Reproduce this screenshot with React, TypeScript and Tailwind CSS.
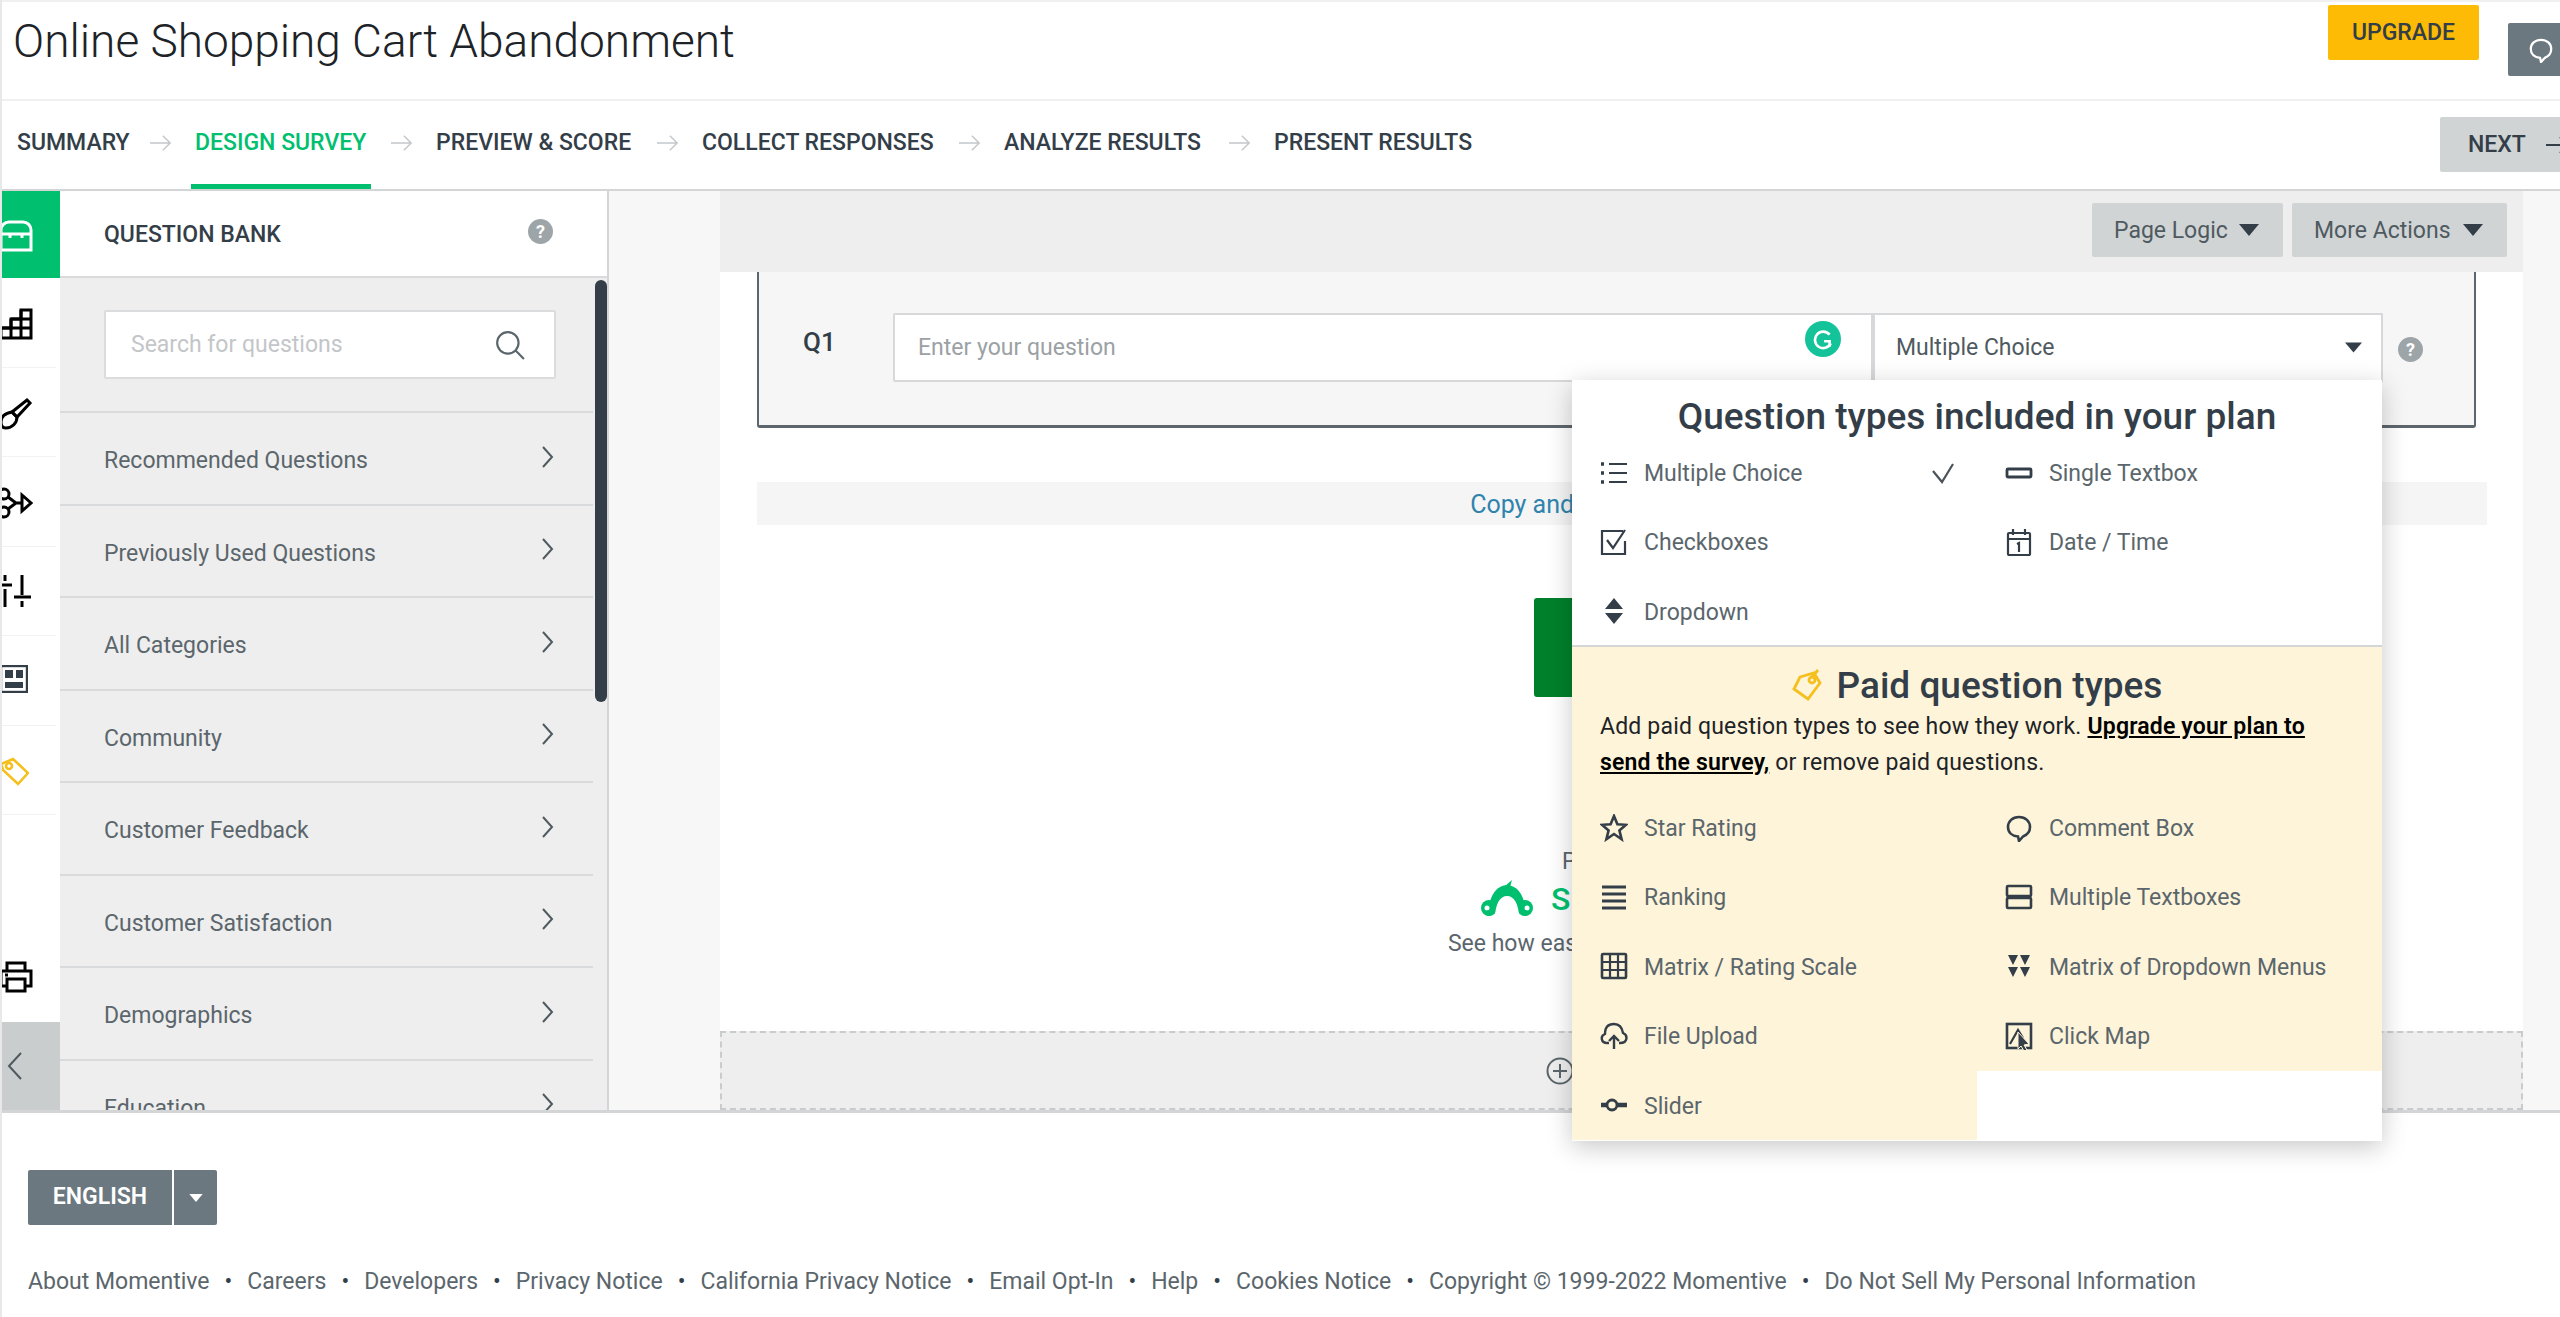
import type { ReactNode } from 'react';

const included = [
  { label: 'Multiple Choice', icon: 'list', check: true },
  { label: 'Single Textbox', icon: 'textbox' },
  { label: 'Checkboxes', icon: 'checkbox' },
  { label: 'Date / Time', icon: 'date' },
  { label: 'Dropdown', icon: 'dropdown' },
];

const paid = [
  { label: 'Star Rating', icon: 'star' },
  { label: 'Comment Box', icon: 'comment' },
  { label: 'Ranking', icon: 'ranking' },
  { label: 'Multiple Textboxes', icon: 'multi' },
  { label: 'Matrix / Rating Scale', icon: 'matrix' },
  { label: 'Matrix of Dropdown Menus', icon: 'matrixDrop' },
  { label: 'File Upload', icon: 'upload' },
  { label: 'Click Map', icon: 'clickmap' },
  { label: 'Slider', icon: 'slider' },
];

const bank = [
  'Recommended Questions',
  'Previously Used Questions',
  'All Categories',
  'Community',
  'Customer Feedback',
  'Customer Satisfaction',
  'Demographics',
  'Education',
];

const tabs = [
  { label: 'SUMMARY', w: 'w-[110px]' },
  { label: 'DESIGN SURVEY', w: 'w-[173px]', active: true },
  { label: 'PREVIEW & SCORE', w: 'w-[198px]' },
  { label: 'COLLECT RESPONSES', w: 'w-[234px]' },
  { label: 'ANALYZE RESULTS', w: 'w-[202px]' },
  { label: 'PRESENT RESULTS', w: 'w-[200px]' },
];

const rail = [
  { name: 'stairs', pad: 'pt-[3px]' },
  { name: 'brush', pad: 'pt-[5px]' },
  { name: 'flow', pad: 'pt-[3px]' },
  { name: 'sliders', pad: 'pt-0' },
  { name: 'dash', pad: 'pb-[2px]' },
  { name: 'tag', pad: 'pt-[3px]' },
];

const footerLinks = [
  'About Momentive',
  'Careers',
  'Developers',
  'Privacy Notice',
  'California Privacy Notice',
  'Email Opt-In',
  'Help',
  'Cookies Notice',
  'Copyright © 1999-2022 Momentive',
  'Do Not Sell My Personal Information',
];

function TypeIcon({ name }: { name: string }) {
  const paths: Record<string, ReactNode> = {
    list: (
      <>
        <path d="M9 5h18M9 14h18M9 23h18" />
        <path d="M1 5h3M1 14h3M1 23h3" strokeWidth={3.4} />
      </>
    ),
    textbox: <rect x="2" y="10" width="24" height="8" rx="1" strokeWidth={2.8} />,
    checkbox: (
      <>
        <path d="M25 13v13H2V3h21" />
        <path d="M7 12l6 8 12-18" />
      </>
    ),
    date: (
      <>
        <rect x="3" y="5" width="22" height="22" rx="1" />
        <path d="M3 11h22M8 1v6M20 1v6M12 16l2-1v9" />
      </>
    ),
    dropdown: (
      <>
        <path d="M14 1l9 11H5z" fill="#333e48" stroke="none" />
        <path d="M14 27L5 16h18z" fill="#333e48" stroke="none" />
      </>
    ),
    star: <path d="M14 2l3.4 8.2 8.6.6-6.6 5.6 2.2 8.8L14 20l-7.600 5.200 2.200-8.800L2 10.800l8.600-.6z" strokeWidth={2.6} />,
    comment: <path d="M14 3c6.500 0 11 4.300 11 10 0 5-3.200 8-7 9.500L14 27l-1-4.500C7 22 3 18.500 3 13 3 7.300 7.500 3 14 3z" strokeWidth={2.6} />,
    ranking: <path d="M2 4h24M2 11h24M2 18h24M2 25h24" strokeWidth={2.8} />,
    multi: (
      <>
        <rect x="2" y="3" width="24" height="10" rx="1" strokeWidth={2.6} />
        <rect x="2" y="15" width="24" height="10" rx="1" strokeWidth={2.6} />
      </>
    ),
    matrix: (
      <>
        <rect x="2" y="2" width="24" height="24" rx="1" strokeWidth={2.6} />
        <path d="M10 2v24M18 2v24M2 10h24M2 18h24" />
      </>
    ),
    matrixDrop: (
      <>
        <path d="M3 3h10l-5 10zM15 3h10l-5 10zM3 15h10l-5 10zM15 15h10l-5 10z" fill="#333e48" stroke="none" />
      </>
    ),
    upload: (
      <>
        <path d="M9 21H7C1 21 0 14 5 12c0-8 4-10 9-10s8 3 9 9c5 2 5 10-3 10h-1" strokeWidth={2.4} />
        <path d="M14 27V14M9 19l5-5 5 5" strokeWidth={2.4} />
      </>
    ),
    clickmap: (
      <>
        <rect x="2" y="2" width="24" height="24" strokeWidth={2.6} />
        <path d="M5 22l8-14 5 8" />
        <path d="M13 10l11 12-5 1 3 5-3 1-3-5-3 3z" fill="#333e48" stroke="#fff4d9" strokeWidth={1} />
      </>
    ),
    slider: (
      <>
        <path d="M1 14h6M18 14h9" strokeWidth={4.4} />
        <circle cx="12" cy="14" r="5" strokeWidth={2.8} />
      </>
    ),
  };
  return (
    <svg viewBox="0 0 28 28" fill="none" stroke="#333e48" strokeWidth={2.2} className="w-[28px] h-[28px] shrink-0">
      {paths[name]}
    </svg>
  );
}

function TypeItem({ label, icon, check }: { label: string; icon: string; check?: boolean }) {
  return (
    <div className="flex items-center h-full pl-[28px] pr-[22px] gap-[16px] text-[23px] text-[#5b666c]">
      <TypeIcon name={icon} />
      <span className="flex-1 whitespace-nowrap pt-[3px]">{label}</span>
      {check && (
        <svg viewBox="0 0 24 24" fill="none" stroke="#4a545a" strokeWidth={2.2} className="w-[24px] h-[24px]">
          <path d="M2 10l9 11L22 3" />
        </svg>
      )}
    </div>
  );
}

function Caret({ className }: { className: string }) {
  return (
    <svg viewBox="0 0 20 12" className={className}>
      <path d="M0 0h20L10 12z" />
    </svg>
  );
}

function Help({ className }: { className: string }) {
  return (
    <div className={`rounded-full bg-[#9da5a9] text-white font-bold text-[18px] flex items-center justify-center w-[25px] h-[25px] ${className}`}>
      ?
    </div>
  );
}

function Chevron() {
  return (
    <svg viewBox="0 0 12 24" fill="none" stroke="#4f5a60" strokeWidth={2} className="w-[12px] h-[24px] -mt-[3px]">
      <path d="M1 2l9 10-9 10" />
    </svg>
  );
}

function RailIcon({ name }: { name: string }) {
  if (name === 'chest')
    return (
      <svg viewBox="0 0 34 32" fill="none" stroke="#fff" strokeWidth={3} className="w-[34px] h-[32px] -ml-[3px]">
        <path d="M2 30V10a8 8 0 0 1 8-8h14a8 8 0 0 1 8 8v20z" />
        <path d="M2 14h30M11 14v4M23 14v4" />
      </svg>
    );
  if (name === 'stairs')
    return (
      <svg viewBox="0 0 34 32" fill="none" stroke="#000" strokeWidth={3} className="w-[34px] h-[32px] -ml-[3px]">
        <path d="M22 2h10v28H2V20h10V11h10z" />
        <path d="M22 2v28M12 11v19M12 11h20M2 20h30" />
      </svg>
    );
  if (name === 'brush')
    return (
      <svg viewBox="0 0 34 32" fill="none" stroke="#000" strokeWidth={3} className="w-[34px] h-[32px] -ml-[3px]">
        <path d="M13 14L28 2l3 3-13 14z" />
        <path d="M13 14c-6 1-11 4-11 10 0 4 2 6 5 6 6 0 11-5 11-11z" />
      </svg>
    );
  if (name === 'flow')
    return (
      <svg viewBox="0 0 34 32" fill="none" stroke="#000" strokeWidth={3} className="w-[34px] h-[32px] -ml-[3px]">
        <circle cx="5" cy="7" r="5" />
        <circle cx="5" cy="25" r="5" />
        <path d="M9 10l8 6-8 6M17 16h6" />
        <path d="M23 8l9 8-9 8z" />
      </svg>
    );
  if (name === 'sliders')
    return (
      <svg viewBox="0 0 34 32" fill="none" stroke="#000" strokeWidth={3} className="w-[34px] h-[32px] -ml-[3px]">
        <path d="M6 0v6M6 14v18M23 0v20M23 26v6" />
        <path d="M-2 10h15M15 22h17" />
      </svg>
    );
  if (name === 'dash')
    return (
      <svg viewBox="0 0 28 28" fill="none" stroke="#333e48" strokeWidth={2.4} className="w-[28px] h-[28px] -ml-[2px]">
        <rect x="1" y="1" width="26" height="26" />
        <path d="M5 5h8v8H5zM16 5h7v8h-7zM5 17h18v6H5z" fill="#333e48" stroke="none" />
      </svg>
    );
  if (name === 'tag')
    return (
      <svg viewBox="0 0 30 30" fill="none" stroke="#f5bf1d" strokeWidth={2.6} className="w-[30px] h-[30px] -ml-[3px]">
        <path d="M2 8l12-5 15 14-10 11L4 14z" />
        <circle cx="10" cy="10" r="3" />
      </svg>
    );
  return (
    <svg viewBox="0 0 34 32" fill="none" stroke="#000" strokeWidth={3} className="w-[34px] h-[32px] -ml-[3px]">
      <path d="M8 10V2h18v8" />
      <path d="M8 25H2V10h30v15h-6" />
      <rect x="8" y="18" width="18" height="12" />
      <path d="M6 14h3" />
    </svg>
  );
}

function MonkeyLogo() {
  return (
    <svg viewBox="0 0 54 38" className="w-[54px] h-[38px] shrink-0">
      <path fill="#00bf6f" d="M9 28C10 14 18 5 27 5s17 9 18 23z" />
      <path fill="#00bf6f" d="M25 6l7-6-2 7z" />
      <circle cx="9" cy="28" r="8" fill="#00bf6f" />
      <circle cx="45" cy="28" r="8" fill="#00bf6f" />
      <circle cx="7" cy="28" r="2.500" fill="#fff" />
      <circle cx="47" cy="28" r="2.500" fill="#fff" />
      <path fill="#fff" d="M15 38C15 24 20 16 27 16s12 8 12 22z" />
      <circle cx="9" cy="33" r="3" fill="#00bf6f" />
      <circle cx="45" cy="33" r="3" fill="#00bf6f" />
    </svg>
  );
}

export default function App() {
  return (
    <div className="relative w-[2560px] h-[1317px] overflow-hidden bg-white border-l-2 border-[#e8e8e8] font-['Roboto',sans-serif] text-[#333e48] box-border">
      {/* title bar */}
      <div className="flex items-start h-[101px] border-t-2 border-b-2 border-[#f0f0f0] -ml-[2px]">
        <h1 className="mt-[13px] ml-[13px] text-[46px] leading-[52px] font-light text-[#1d2327] whitespace-nowrap">
          Online Shopping Cart Abandonment
        </h1>
        <div className="ml-auto mt-[3px] w-[151px] h-[55px] pt-[2px] rounded-[2px] bg-[#fdbb05] flex items-center justify-center text-[23px] font-medium text-[#333e48]">
          UPGRADE
        </div>
        <div className="ml-[29px] mt-[21px] w-[52px] h-[53px] rounded-l-[2px] bg-[#6b787f] flex items-center pl-[20px]">
          <svg viewBox="0 0 28 28" fill="none" stroke="#fff" strokeWidth={2.4} className="w-[26px] h-[26px] shrink-0">
            <path d="M14 3c6.500 0 11 4.300 11 10 0 5-3.200 8-7 9.500L14 27l-1-4.500C7 22 3 18.500 3 13 3 7.300 7.500 3 14 3z" />
          </svg>
        </div>
      </div>

      {/* step tabs */}
      <div className="flex h-[90px] border-b-2 border-[#d3d5d6] -ml-[2px] pl-[17px]">
        {tabs.map((tab, i) => (
          <div key={tab.label} className="flex">
            <div
              className={`relative ${tab.w} pt-[27px] text-[23px] leading-[30px] font-medium whitespace-nowrap ${
                tab.active ? 'text-[#00bf6f]' : 'text-[#333e48]'
              }`}
            >
              {tab.label}
              {tab.active && <div className="absolute -left-[4px] -right-[3px] top-[83px] h-[5px] bg-[#00bf6f]" />}
            </div>
            {i < tabs.length - 1 && (
              <div className="w-[68px] pt-[32px] flex justify-center">
                <svg viewBox="0 0 24 20" fill="none" stroke="#c4c8ca" strokeWidth={1.6} className="w-[22px] h-[20px]">
                  <path d="M0 10h22M14 2l8 8-8 8" />
                </svg>
              </div>
            )}
          </div>
        ))}
        <div className="ml-auto mt-[16px] w-[120px] h-[55px] rounded-l-[2px] bg-[#d0d4d5] flex items-center pl-[28px] gap-[20px] overflow-hidden">
          <span className="text-[23px] font-medium pt-[2px]">NEXT</span>
          <svg viewBox="0 0 24 20" fill="none" stroke="#333e48" strokeWidth={2} className="w-[24px] h-[20px] shrink-0">
            <path d="M0 10h22M14 2l8 8-8 8" />
          </svg>
        </div>
      </div>

      {/* main */}
      <div className="flex h-[922px] border-b-[3px] border-[#d3d5d6] overflow-hidden">
        {/* icon rail */}
        <div className="w-[58px] shrink-0 flex flex-col">
          <div className="h-[87px] bg-[#00bf6f] flex items-center -ml-[2px] pl-[2px] pt-[3px]">
            <RailIcon name="chest" />
          </div>
          {rail.map(({ name, pad }) => (
            <div key={name} className={`h-[89.500px] border-b border-[#f2f2f2] mr-[4px] flex items-center ${pad}`}>
              <RailIcon name={name} />
            </div>
          ))}
          <div className="flex-1" />
          <div className="h-[92px] flex items-center pt-[2px]">
            <RailIcon name="print" />
          </div>
          <div className="h-[88px] bg-[#c9cdce] flex items-center pl-[5px]">
            <svg viewBox="0 0 16 30" fill="none" stroke="#4f5a60" strokeWidth={2} className="w-[16px] h-[30px]">
              <path d="M14 2L2 15l12 13" />
            </svg>
          </div>
        </div>

        {/* question bank */}
        <div className="relative w-[549px] shrink-0 border-r-2 border-[#d3d5d6] flex flex-col overflow-hidden">
          <div className="h-[87px] shrink-0 bg-white border-b-2 border-[#d8dadb] flex items-center justify-between pl-[44px] pr-[54px]">
            <span className="text-[23px] font-medium pt-[3px]">QUESTION BANK</span>
            <Help className="-mt-[4px]" />
          </div>
          <div className="flex-1 bg-[#eeeeee]">
            <div className="w-[533px] h-[135px] pt-[32px] pl-[44px] border-b-2 border-[#d8dadb]">
              <div className="w-[452px] h-[69px] bg-white border-2 border-[#dadcdd] rounded-[2px] flex items-center justify-between pl-[25px] pr-[29px]">
                <span className="text-[23px] text-[#c3c6c8] pt-[2px]">Search for questions</span>
                <svg viewBox="0 0 28 28" fill="none" stroke="#5b666c" strokeWidth={2} className="w-[30px] h-[30px]">
                  <circle cx="12" cy="12" r="10" />
                  <path d="M19 19l8 8" />
                </svg>
              </div>
            </div>
            {bank.map((row) => (
              <div
                key={row}
                className="w-[533px] h-[92.500px] border-b-2 border-[#d8dadb] flex items-center justify-between pl-[44px] pr-[39px] text-[23px] text-[#5b666c]"
              >
                <span className="pt-[6px]">{row}</span>
                <Chevron />
              </div>
            ))}
          </div>
          <div className="absolute left-[535px] top-[89px] w-[12px] h-[422px] rounded-full bg-[#333e48]" />
        </div>

        {/* gutter */}
        <div className="w-[111px] shrink-0 bg-[#f7f7f7]" />

        {/* canvas */}
        <div className="w-[1803px] shrink-0 flex flex-col bg-white">
          <div className="h-[81px] shrink-0 bg-[#eeeeee] flex justify-end pt-[12px] pr-[16px] gap-[9px]">
            <div className="w-[191px] h-[54px] rounded-[2px] bg-[#d0d4d5] flex items-center justify-between pl-[22px] pr-[24px] text-[23px] text-[#4f5a60]">
              <span className="pt-[2px]">Page Logic</span>
              <Caret className="w-[20px] h-[12px] fill-[#333e48]" />
            </div>
            <div className="w-[215px] h-[54px] rounded-[2px] bg-[#d0d4d5] flex items-center justify-between pl-[22px] pr-[24px] text-[23px] text-[#4f5a60]">
              <span className="pt-[2px]">More Actions</span>
              <Caret className="w-[20px] h-[12px] fill-[#333e48]" />
            </div>
          </div>

          <div className="ml-[37px] mr-[47px] h-[156px] shrink-0 flex bg-[#f6f6f6] border-x-2 border-b-[3px] border-[#5d666c] rounded-b-[3px] pt-[41px] pl-[44px]">
            <span className="w-[90px] pt-[13px] text-[26px] font-medium leading-[32px]">Q1</span>
            <div className="relative w-[980px] h-[69px] bg-white border-2 border-[#d6d8d9] rounded-l-[2px] flex items-center pl-[23px] text-[23px] text-[#9ba1a4]">
              <span className="pt-[2px]">Enter your question</span>
              <div className="absolute right-[30px] top-[6px] w-[36px] h-[36px] rounded-full bg-[#15c39a] flex items-center justify-center">
                <svg viewBox="0 0 20 20" fill="none" stroke="#fff" strokeWidth={2.4} className="w-[22px] h-[22px]">
                  <path d="M16 6a7.500 7.500 0 1 0 1 8M11 12h5v5" />
                </svg>
              </div>
            </div>
            <div className="w-[510px] h-[69px] bg-white border-2 border-[#d6d8d9] flex items-center justify-between pl-[21px] pr-[19px] text-[23px] text-[#4f5a60]">
              <span className="pt-[2px]">Multiple Choice</span>
              <Caret className="w-[17px] h-[11px] fill-[#333e48]" />
            </div>
            <Help className="ml-[15px] mt-[24px]" />
          </div>

          <div className="ml-[37px] mr-[36px] mt-[54px] h-[43px] shrink-0 bg-[#f5f5f5] flex items-center justify-center pr-[16px] pt-[2px] text-[25px] text-[#2f84ad]">
            Copy and paste questions
          </div>

          <div className="mx-auto mt-[73px] w-[176px] h-[99px] shrink-0 rounded-[3px] bg-[#00802b]" />

          <div className="mt-[150px] text-center text-[23px] leading-[30px] text-[#5b666c]">Powered by</div>
          <div className="flex items-center justify-center gap-[17px] h-[37px] mt-[3px] text-[32px] font-medium text-[#00bf6f] -translate-x-[1px]">
            <MonkeyLogo />
            SurveyMonkey
          </div>
          <div className="mt-[13px] pl-[26px] text-center text-[23px] leading-[28px] text-[#5b666c]">
            See how easy it is to create a survey.
          </div>

          <div className="mt-auto h-[79px] shrink-0 bg-[#eeeeee] border-2 border-dashed border-[#c9cccd] flex items-center justify-center">
            <svg viewBox="0 0 28 28" fill="none" stroke="#5b666c" strokeWidth={2} className="w-[28px] h-[28px] -translate-x-[62px]">
              <circle cx="14" cy="14" r="12.500" />
              <path d="M14 7v14M7 14h14" />
            </svg>
          </div>
        </div>

        <div className="flex-1 bg-[#f7f7f7]" />
      </div>

      {/* question type menu */}
      <div className="absolute left-[1570px] top-[380px] w-[810px] h-[761px] bg-white shadow-[0_6px_24px_rgba(0,0,0,0.22)]">
        <div className="h-[58px] pt-[15px] text-center text-[37px] leading-[44px] font-medium text-[#333e48]">
          Question types included in your plan
        </div>
        <div className="grid grid-cols-2 auto-rows-[69.400px] h-[209px] border-b-2 border-[#d3d5d6]">
          {included.map((item) => (
            <TypeItem key={item.label} {...item} />
          ))}
        </div>
        <div className="bg-[#fef4d9] h-[146px]">
          <div className="pt-[17px] h-[61px] -mb-[2px] flex items-center justify-center gap-[15px] text-[37px] font-medium text-[#333e48]">
            <svg viewBox="0 0 30 32" fill="none" stroke="#f5bf1d" strokeWidth={2.8} className="w-[30px] h-[32px] -mt-[2px]">
              <path d="M8 8L22 4l6 10-12 16-14-10z" />
              <circle cx="20" cy="11" r="3" />
              <path d="M20 8l6-7" />
            </svg>
            Paid question types
          </div>
          <p className="pl-[28px] pt-[3px] text-[23px] leading-[36px] tracking-[0.18px] text-[#1d2327] whitespace-nowrap">
            Add paid question types to see how they work.{' '}
            <a className="font-semibold underline text-[#000]">
              Upgrade your plan to
              <br />
              send the survey,
            </a>{' '}
            or remove paid questions.
          </p>
        </div>
        <div className="grid grid-cols-2 auto-rows-[69.400px]">
          {paid.map((item) => (
            <div key={item.label} className="bg-[#fef4d9]">
              <TypeItem {...item} />
            </div>
          ))}
        </div>
      </div>

      {/* footer */}
      <div className="pl-[26px] pt-[57px]">
        <div className="flex w-[189px] h-[55px] rounded-[2px] bg-[#6b787f] text-white">
          <div className="w-[146px] border-r-2 border-white flex items-center justify-center text-[23px] font-semibold">
            ENGLISH
          </div>
          <div className="flex-1 flex items-center justify-center">
            <Caret className="w-[14px] h-[8px] fill-white" />
          </div>
        </div>
        <div className="mt-[42px] flex items-center text-[23px] leading-[30px] text-[#5b666c] whitespace-nowrap">
          {footerLinks.map((link, i) => (
            <span key={link} className="flex items-center">
              {i > 0 && <span className="mx-[15px] text-[#333e48]">•</span>}
              {link}
            </span>
          ))}
        </div>
      </div>
    </div>
  );
}
